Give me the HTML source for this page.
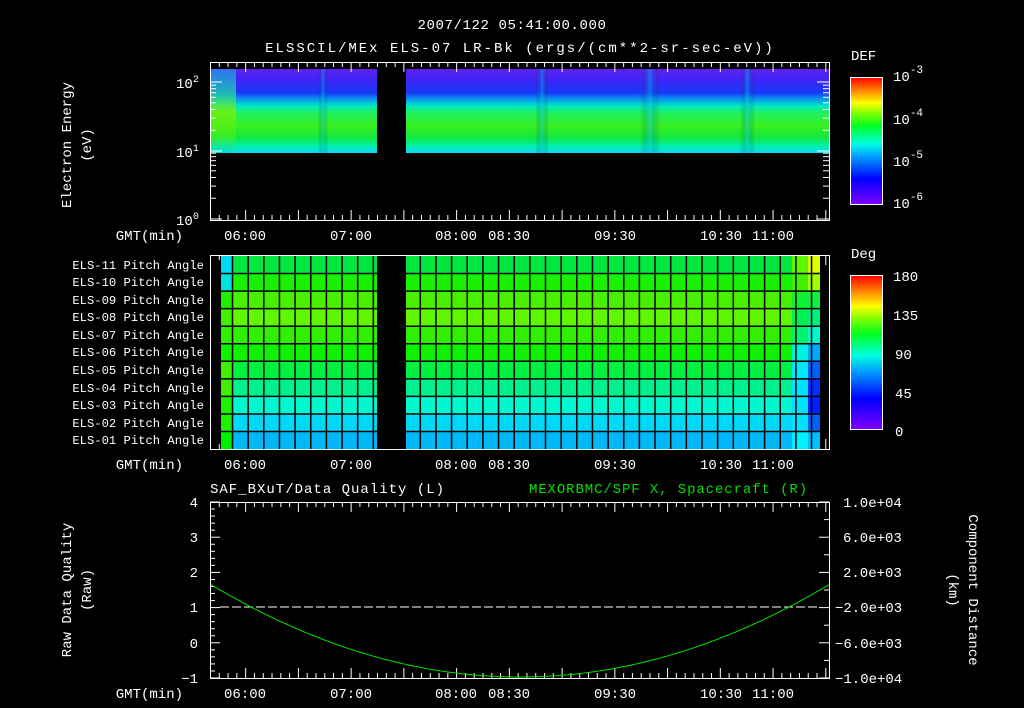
<!DOCTYPE html>
<html><head><meta charset="utf-8"><style>
html,body{margin:0;padding:0;background:#000;width:1024px;height:708px;overflow:hidden}
svg{display:block}
text{font-family:"Liberation Mono",monospace;fill:#fff;font-size:14px}
text.pa{font-size:12.2px}
</style></head><body>
<svg id="s" width="1024" height="708" xmlns="http://www.w3.org/2000/svg">
<defs>
<linearGradient id="spec" x1="0" y1="0" x2="0" y2="1">
<stop offset="0" stop-color="#6020f0"/><stop offset="0.15" stop-color="#3a28f8"/>
<stop offset="0.28" stop-color="#1838f8"/><stop offset="0.36" stop-color="#0898f0"/>
<stop offset="0.44" stop-color="#00e8c0"/><stop offset="0.52" stop-color="#20f060"/>
<stop offset="0.68" stop-color="#38f020"/><stop offset="0.82" stop-color="#10e840"/>
<stop offset="0.92" stop-color="#00f0b0"/><stop offset="1" stop-color="#10d8f0"/></linearGradient>
<linearGradient id="cb" x1="0" y1="1" x2="0" y2="0">
<stop offset="0" stop-color="#8000ff"/><stop offset="0.2" stop-color="#0000ff"/>
<stop offset="0.38" stop-color="#00a0ff"/><stop offset="0.48" stop-color="#00ffe0"/>
<stop offset="0.62" stop-color="#00ff20"/><stop offset="0.72" stop-color="#80ff00"/>
<stop offset="0.8" stop-color="#ffff00"/><stop offset="0.9" stop-color="#ff8000"/>
<stop offset="1" stop-color="#ff0000"/></linearGradient>
<linearGradient id="streak" x1="0" y1="0" x2="1" y2="0">
<stop offset="0" stop-color="#000" stop-opacity="0"/><stop offset="0.5" stop-color="#00c8ff" stop-opacity="0.4"/><stop offset="1" stop-color="#000" stop-opacity="0"/></linearGradient>
<linearGradient id="lg" x1="0" y1="0" x2="0" y2="1">
<stop offset="0" stop-color="#2090f0"/><stop offset="0.3" stop-color="#20e0a0"/><stop offset="0.5" stop-color="#80f000"/><stop offset="0.8" stop-color="#40f020"/><stop offset="1" stop-color="#00e0e0"/></linearGradient>
</defs>
<text x="512" y="29" text-anchor="middle" letter-spacing="0.6">2007/122 05:41:00.000</text>
<text x="520" y="52" text-anchor="middle" letter-spacing="2">ELSSCIL/MEx ELS-07 LR-Bk  (ergs/(cm**2-sr-sec-eV))</text>
<rect x="211" y="69" width="166" height="84" fill="url(#spec)"/>
<rect x="406" y="69" width="423" height="84" fill="url(#spec)"/>
<rect x="211" y="69" width="25" height="84" fill="url(#lg)" opacity="0.75"/>
<rect x="535" y="69" width="14" height="84" fill="url(#streak)"/>
<rect x="640" y="69" width="20" height="84" fill="url(#streak)"/>
<rect x="740" y="69" width="15" height="84" fill="url(#streak)"/>
<rect x="318" y="69" width="10" height="84" fill="url(#streak)"/>
<g id="ax" stroke="#fff" fill="none" stroke-width="1"></g>
<text transform="translate(71,145) rotate(-90)" text-anchor="middle">Electron Energy</text>
<text transform="translate(91,145) rotate(-90)" text-anchor="middle">(eV)</text>
<text x="176" y="88">10<tspan dy="-6" font-size="10">2</tspan></text>
<text x="176" y="157">10<tspan dy="-6" font-size="10">1</tspan></text>
<text x="176" y="225">10<tspan dy="-6" font-size="10">0</tspan></text>
<text x="851" y="60">DEF</text>
<rect x="850.5" y="77.5" width="32" height="127" fill="url(#cb)" stroke="#fff"/>
<text x="893" y="81">10<tspan dy="-8" font-size="11">-3</tspan></text>
<text x="893" y="124">10<tspan dy="-8" font-size="11">-4</tspan></text>
<text x="893" y="166">10<tspan dy="-8" font-size="11">-5</tspan></text>
<text x="893" y="208">10<tspan dy="-8" font-size="11">-6</tspan></text>
<g id="rows"></g>
<rect x="377" y="256" width="29" height="193" fill="#000"/>
<g id="grid" stroke="#000" stroke-width="1.5"></g>
<text class="pa" x="204" y="269" text-anchor="end">ELS-11 Pitch Angle</text>
<text class="pa" x="204" y="286" text-anchor="end">ELS-10 Pitch Angle</text>
<text class="pa" x="204" y="304" text-anchor="end">ELS-09 Pitch Angle</text>
<text class="pa" x="204" y="321" text-anchor="end">ELS-08 Pitch Angle</text>
<text class="pa" x="204" y="339" text-anchor="end">ELS-07 Pitch Angle</text>
<text class="pa" x="204" y="356" text-anchor="end">ELS-06 Pitch Angle</text>
<text class="pa" x="204" y="374" text-anchor="end">ELS-05 Pitch Angle</text>
<text class="pa" x="204" y="392" text-anchor="end">ELS-04 Pitch Angle</text>
<text class="pa" x="204" y="409" text-anchor="end">ELS-03 Pitch Angle</text>
<text class="pa" x="204" y="427" text-anchor="end">ELS-02 Pitch Angle</text>
<text class="pa" x="204" y="444" text-anchor="end">ELS-01 Pitch Angle</text>
<text x="851" y="258">Deg</text>
<rect x="850.5" y="275.5" width="32" height="154" fill="url(#cb)" stroke="#fff"/>
<text x="893" y="281">180</text>
<text x="893" y="320">135</text>
<text x="895" y="359">90</text>
<text x="895" y="398">45</text>
<text x="895" y="436">0</text>
<text x="210" y="493" letter-spacing="1">SAF_BXuT/Data Quality (L)</text>
<text x="808" y="493" text-anchor="end" letter-spacing="0.9" style="fill:#00e000">MEXORBMC/SPF X, Spacecraft (R)</text>
<line x1="220" y1="607" x2="820" y2="607" stroke="#fff" stroke-dasharray="9,3"/>
<text transform="translate(71,590) rotate(-90)" text-anchor="middle">Raw Data Quality</text>
<text transform="translate(91,590) rotate(-90)" text-anchor="middle">(Raw)</text>
<text x="198" y="507" text-anchor="end">4</text><text x="198" y="542" text-anchor="end">3</text>
<text x="198" y="577" text-anchor="end">2</text><text x="198" y="612" text-anchor="end">1</text>
<text x="198" y="648" text-anchor="end">0</text><text x="198" y="683" text-anchor="end">−1</text>
<text x="843" y="507">1.0e+04</text><text x="843" y="542">6.0e+03</text>
<text x="843" y="577">2.0e+03</text><text x="835" y="612">−2.0e+03</text>
<text x="835" y="648">−6.0e+03</text><text x="835" y="683">−1.0e+04</text>
<text transform="translate(969,590) rotate(90)" text-anchor="middle">Component Distance</text>
<text transform="translate(949,590) rotate(90)" text-anchor="middle">(km)</text>
</svg>
<script>
var NS="http://www.w3.org/2000/svg",s=document.getElementById('s');
function el(p,t,a){var e=document.createElementNS(NS,t);for(var k in a)e.setAttribute(k,a[k]);p.appendChild(e);return e;}
var ax=document.getElementById('ax');
var panels=[[62,220],[255,449],[502,678]];
var times=[["06:00",245],["07:00",351],["08:00",456],["08:30",509],["09:30",615],["10:30",721],["11:00",773]];
panels.forEach(function(p,i){
 el(ax,'rect',{x:210.5,y:p[0]+.5,width:619,height:p[1]-p[0]});
 for(var k=0;k<71;k++){var x=210.5+k*8.79;if(x>829)break;var L=(k%6==4)?10:5;
  el(ax,'line',{x1:x,y1:p[0],x2:x,y2:p[0]+L});el(ax,'line',{x1:x,y1:p[1],x2:x,y2:p[1]-L});}
 var t=el(s,'text',{x:183,y:p[1]+20,'text-anchor':'end'});t.textContent="GMT(min)";
 times.forEach(function(tt){var e=el(s,'text',{x:tt[1],y:p[1]+20,'text-anchor':'middle'});e.textContent=tt[0];});
});
[[82,12],[151,12],[219,12]].forEach(function(d){el(ax,'line',{x1:210,y1:d[0],x2:222,y2:d[0]});el(ax,'line',{x1:829,y1:d[0],x2:817,y2:d[0]});});
[0.301,0.477,0.602,0.699,0.778,0.845,0.903,0.954].forEach(function(f){[151,219].forEach(function(b){var y=b-f*69;if(y<63)return;
 el(ax,'line',{x1:210,y1:y,x2:216,y2:y});el(ax,'line',{x1:829,y1:y,x2:823,y2:y});});});
for(var k=0;k<22;k++){var y=82+k*6;if(y>203)break;el(ax,'line',{x1:882,y1:y,x2:876,y2:y});}
for(var k=0;k<20;k++){var y=283+k*7.7;if(y>428)break;el(ax,'line',{x1:882,y1:y,x2:876,y2:y});}
for(var k=0;k<=25;k++){var y=502+k*7.04;var L=(k%5==0)?10:5;el(ax,'line',{x1:210,y1:y,x2:210+L,y2:y});}
for(var k=0;k<=10;k++){var y=502+k*17.6;var L=(k%2==0)?10:5;el(ax,'line',{x1:829,y1:y,x2:829-L,y2:y});}
var cols=["#00e840","#18f000","#48f000","#60f800","#30f000","#10f000","#00f040","#00f090","#00f8d0","#00d8f8","#00b8f8"];
var rg=document.getElementById('rows');
var right=["#e0ff00","#a0ff00","#10f040","#00f080","#00f8d0","#00a8ff","#0060ff","#0030ff","#0020ff","#0060f8","#00c0ff"];
var mid=["#60f800","#40f000","#10f030","#00f050","#00f070","#00f0e0","#00e8ff","#00e0ff","#00e0ff","#00e0ff","#00f0ff"];
var left=["#00d8f8","#00e0e0","#20f000","#40f000","#30f000","#10f000","#40f000","#40f000","#20f000","#20f000","#00f000"];
for(var r=0;r<11;r++){var y=256+r*17.55;
 el(rg,'rect',{x:221,y:y,width:599,height:17.6,fill:cols[r]});
 el(rg,'rect',{x:221,y:y,width:12,height:17.6,fill:left[r]});
 el(rg,'rect',{x:792,y:y,width:16,height:17.6,fill:mid[r]});
 el(rg,'rect',{x:808,y:y,width:12,height:17.6,fill:right[r]});}
var g=document.getElementById('grid');
for(var r=1;r<11;r++){var y=256+r*17.55;el(g,'line',{x1:221,y1:y,x2:820,y2:y});}
for(var x=232.5;x<820;x+=15.65)el(g,'line',{x1:x,y1:256,x2:x,y2:449});
var d="";for(var x=211;x<=829;x+=3){var u=(x-520)/310;var y=677-93*u*u;d+=(d?"L":"M")+x+","+y.toFixed(1);}
el(s,'path',{d:d,fill:'none',stroke:'#00e000'});
</script>
</body></html>
